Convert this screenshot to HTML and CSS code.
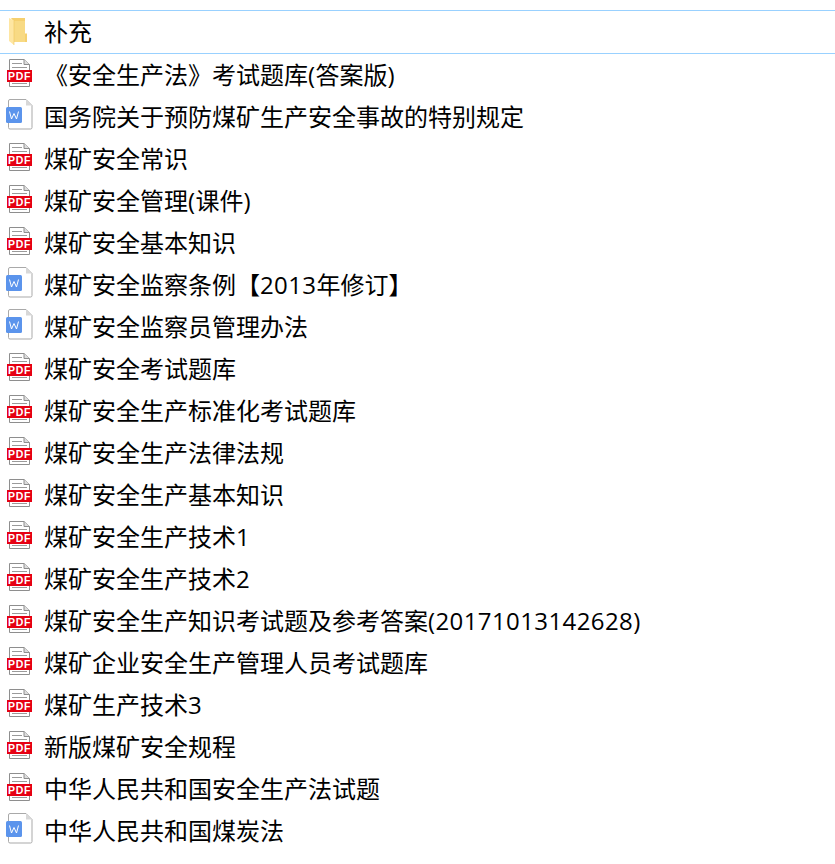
FILE: index.html
```html
<!DOCTYPE html>
<html lang="zh-CN">
	<head>
		<meta charset="utf-8" />
		<title>煤矿安全</title>
		<link rel="stylesheet" href="styles.css">
	</head>

	<body>
		<svg class="defs" width="0" height="0">
			<symbol id="i-folder" viewBox="0 0 28 36">
				<path d="M5 4H19V19.500H21V28H8V8Z" fill="#f5d06f"/>
				<path d="M8 7H19V28H8Z" fill="#f8da84"/>
				<path d="M3 4L8 6.500V31L3 27Z" fill="#fee6a2"/>
				<path d="M8 6.500V31" stroke="#eec65f" stroke-width=".6"/>
			</symbol>
			<symbol id="i-pdf" viewBox="0 0 28 36">
				<path d="M3.500 2.500H18L23.500 7.500V29.500H3.500Z" fill="#fff" stroke="#8e8e8e"/>
				<path d="M18 2.500V7.500H23.500" fill="#ddd" stroke="#8e8e8e"/>
				<path d="M6 6.500H16M6 10.500H21M6 26.500H21" stroke="#9a9a9a"/>
				<rect x="1" y="13" width="25" height="12" fill="#e60012"/>
			</symbol>
			<symbol id="i-word" viewBox="0 0 28 36">
				<path d="M4 .5H20L26 6.500V28.500Q26 30 24.500 30H4Q2.500 30 2.500 28.500V2Q2.500 .5 4 .5Z" fill="#fff" stroke="#a9a9a9"/>
				<path d="M20 .5V6.500H26Z" fill="#d8d8d8"/>
				<rect x="0" y="8" width="16" height="16" rx="1.500" fill="#5b94ec"/>
				<path d="M3.500 12.500L5.500 20L8 14.500L10.500 20L12.500 12.500" fill="none" stroke="#fff"/>
			</symbol>
		</svg>

		<ul class="file-list">
			<li class="file-row file-row-selected"><svg class="file-icon"><use href="#i-folder"/></svg><span>补充</span></li>
			<li class="file-row"><svg class="file-icon"><use href="#i-pdf"/><text x="13.500" y="23" class="pdf-label">PDF</text></svg><span>《安全生产法》考试题库<span class="latin">(</span>答案版<span class="latin">)</span></span></li>
			<li class="file-row"><svg class="file-icon"><use href="#i-word"/></svg><span>国务院关于预防煤矿生产安全事故的特别规定</span></li>
			<li class="file-row"><svg class="file-icon"><use href="#i-pdf"/><text x="13.500" y="23" class="pdf-label">PDF</text></svg><span>煤矿安全常识</span></li>
			<li class="file-row"><svg class="file-icon"><use href="#i-pdf"/><text x="13.500" y="23" class="pdf-label">PDF</text></svg><span>煤矿安全管理<span class="latin">(</span>课件<span class="latin">)</span></span></li>
			<li class="file-row"><svg class="file-icon"><use href="#i-pdf"/><text x="13.500" y="23" class="pdf-label">PDF</text></svg><span>煤矿安全基本知识</span></li>
			<li class="file-row"><svg class="file-icon"><use href="#i-word"/></svg><span>煤矿安全监察条例【<span class="latin">2013</span>年修订】</span></li>
			<li class="file-row"><svg class="file-icon"><use href="#i-word"/></svg><span>煤矿安全监察员管理办法</span></li>
			<li class="file-row"><svg class="file-icon"><use href="#i-pdf"/><text x="13.500" y="23" class="pdf-label">PDF</text></svg><span>煤矿安全考试题库</span></li>
			<li class="file-row"><svg class="file-icon"><use href="#i-pdf"/><text x="13.500" y="23" class="pdf-label">PDF</text></svg><span>煤矿安全生产标准化考试题库</span></li>
			<li class="file-row"><svg class="file-icon"><use href="#i-pdf"/><text x="13.500" y="23" class="pdf-label">PDF</text></svg><span>煤矿安全生产法律法规</span></li>
			<li class="file-row"><svg class="file-icon"><use href="#i-pdf"/><text x="13.500" y="23" class="pdf-label">PDF</text></svg><span>煤矿安全生产基本知识</span></li>
			<li class="file-row"><svg class="file-icon"><use href="#i-pdf"/><text x="13.500" y="23" class="pdf-label">PDF</text></svg><span>煤矿安全生产技术1</span></li>
			<li class="file-row"><svg class="file-icon"><use href="#i-pdf"/><text x="13.500" y="23" class="pdf-label">PDF</text></svg><span>煤矿安全生产技术2</span></li>
			<li class="file-row"><svg class="file-icon"><use href="#i-pdf"/><text x="13.500" y="23" class="pdf-label">PDF</text></svg><span>煤矿安全生产知识考试题及参考答案<span class="latin">(20171013142628)</span></span></li>
			<li class="file-row"><svg class="file-icon"><use href="#i-pdf"/><text x="13.500" y="23" class="pdf-label">PDF</text></svg><span>煤矿企业安全生产管理人员考试题库</span></li>
			<li class="file-row"><svg class="file-icon"><use href="#i-pdf"/><text x="13.500" y="23" class="pdf-label">PDF</text></svg><span>煤矿生产技术3</span></li>
			<li class="file-row"><svg class="file-icon"><use href="#i-pdf"/><text x="13.500" y="23" class="pdf-label">PDF</text></svg><span>新版煤矿安全规程</span></li>
			<li class="file-row"><svg class="file-icon"><use href="#i-pdf"/><text x="13.500" y="23" class="pdf-label">PDF</text></svg><span>中华人民共和国安全生产法试题</span></li>
			<li class="file-row"><svg class="file-icon"><use href="#i-word"/></svg><span>中华人民共和国煤炭法</span></li>
		</ul>
	</body>
</html>
```

FILE: styles.css
```css
html, body {
  margin: 0;
  padding: 0;
  background: #fff;
}
body {
  font-family: "Open Sans", "Noto Sans CJK SC", sans-serif;
  color: #000;
}
.defs {
  display: block;
  height: 0;
}
.pdf-label {
  font-family: "Liberation Sans", sans-serif;
  font-size: 10.500px;
  font-weight: bold;
  letter-spacing: .6px;
  fill: #fff;
  text-anchor: middle;
}
.latin {
  letter-spacing: .4px;
}
.file-list {
  list-style: none;
  margin: 0;
  padding: 10px 0 0;
}
.file-row {
  display: flex;
  align-items: center;
  height: 42px;
  padding-left: 6px;
  font-size: 24px;
  line-height: 42px;
  white-space: nowrap;
}
.file-row-selected {
  border-top: 1px solid #99d1ff;
  border-bottom: 1px solid #99d1ff;
}
.file-icon {
  flex: none;
  width: 28px;
  height: 36px;
  margin-right: 10px;
}
```
